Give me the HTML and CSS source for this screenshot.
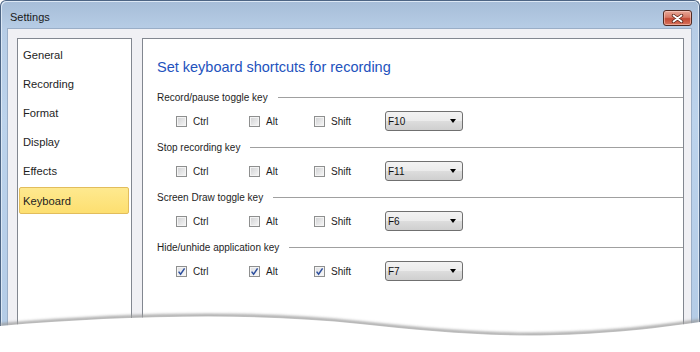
FILE: index.html
```html
<!DOCTYPE html>
<html lang="en">
<head>
    <meta charset="UTF-8">
    <title>Settings</title>
    <link rel="stylesheet" href="styles.css">
</head>
<body>
    <div class="window">
        <div class="titlebar">
            <span class="title">Settings</span>
            <button class="close-btn" type="button" aria-label="Close">
                <svg width="13" height="9" viewBox="0 0 13 9">
                    <path d="M2.5 1.5 L10.5 7.5 M10.5 1.5 L2.5 7.5" stroke="#5a2418" stroke-width="3.4" stroke-linecap="round"/>
                    <path d="M2.5 1.5 L10.5 7.5 M10.5 1.5 L2.5 7.5" stroke="#ffffff" stroke-width="1.8" stroke-linecap="round"/>
                </svg>
            </button>
        </div>

        <div class="client">
            <ul class="nav">
                <li class="nav-item">General</li>
                <li class="nav-item">Recording</li>
                <li class="nav-item">Format</li>
                <li class="nav-item">Display</li>
                <li class="nav-item">Effects</li>
                <li class="nav-item selected">Keyboard</li>
            </ul>

            <div class="content">
                <h1>Set keyboard shortcuts for recording</h1>

                <div class="group">
                    <div class="group-head"><span>Record/pause toggle key</span></div>
                    <div class="key-row">
                        <label class="check"><span class="box"></span>Ctrl</label>
                        <label class="check"><span class="box"></span>Alt</label>
                        <label class="check"><span class="box"></span>Shift</label>
                        <div class="combo"><span>F10</span><span class="arrow"></span></div>
                    </div>
                </div>

                <div class="group">
                    <div class="group-head"><span>Stop recording key</span></div>
                    <div class="key-row">
                        <label class="check"><span class="box"></span>Ctrl</label>
                        <label class="check"><span class="box"></span>Alt</label>
                        <label class="check"><span class="box"></span>Shift</label>
                        <div class="combo"><span>F11</span><span class="arrow"></span></div>
                    </div>
                </div>

                <div class="group">
                    <div class="group-head"><span>Screen Draw toggle key</span></div>
                    <div class="key-row">
                        <label class="check"><span class="box"></span>Ctrl</label>
                        <label class="check"><span class="box"></span>Alt</label>
                        <label class="check"><span class="box"></span>Shift</label>
                        <div class="combo"><span>F6</span><span class="arrow"></span></div>
                    </div>
                </div>

                <div class="group">
                    <div class="group-head"><span>Hide/unhide application key</span></div>
                    <div class="key-row">
                        <label class="check"><span class="box checked"><svg width="9" height="9" viewBox="0 0 9 9"><path d="M1.6 4.6 L3.6 7.2 L7.6 1.4" fill="none" stroke="#2d4f9e" stroke-width="1.5"/></svg></span>Ctrl</label>
                        <label class="check"><span class="box checked"><svg width="9" height="9" viewBox="0 0 9 9"><path d="M1.6 4.6 L3.6 7.2 L7.6 1.4" fill="none" stroke="#2d4f9e" stroke-width="1.5"/></svg></span>Alt</label>
                        <label class="check"><span class="box checked"><svg width="9" height="9" viewBox="0 0 9 9"><path d="M1.6 4.6 L3.6 7.2 L7.6 1.4" fill="none" stroke="#2d4f9e" stroke-width="1.5"/></svg></span>Shift</label>
                        <div class="combo"><span>F7</span><span class="arrow"></span></div>
                    </div>
                </div>
            </div>
        </div>

        <svg class="torn-edge" width="700" height="50" viewBox="0 0 700 50">
            <defs>
                <filter id="soft" x="-5%" y="-50%" width="110%" height="200%">
                    <feGaussianBlur stdDeviation="1.6"/>
                </filter>
            </defs>
            <path d="M0,23 C120,13 250,9 360,21 S560,40 700,19" fill="none" stroke="#9a9a9a" stroke-width="3" filter="url(#soft)"/>
            <path d="M0,24 C120,14 250,10 360,22 S560,41 700,20 L700,50 L0,50 Z" fill="#ffffff"/>
        </svg>
    </div>
</body>
</html>
```

FILE: styles.css
```css
body {
    margin: 0;
    background: #ffffff;
    font-family: "Liberation Sans", Arial, sans-serif;
    overflow: hidden;
}
.window {
    position: relative;
    box-sizing: border-box;
    width: 700px;
    height: 352px;
    display: flex;
    flex-direction: column;
    padding: 0 7px 0 6px;
    border: 1px solid #4d6584;
    border-bottom: none;
    border-radius: 6px 6px 0 0;
    background: linear-gradient(to bottom, #a6bdd8 0px, #b7cde6 28px, #bcd3ec 120px, #b3cbe6 352px);
    box-shadow: inset 1px 1px 0 #dce8f5, inset -1px 0 0 #dce8f5;
}
.titlebar {
    height: 27px;
    display: flex;
    align-items: flex-start;
    justify-content: space-between;
}
.title {
    padding: 10px 0 0 3px;
    font-size: 11px;
    color: #1a1a1a;
}
.close-btn {
    margin-top: 9px;
    width: 29px;
    height: 16px;
    padding: 0;
    display: flex;
    align-items: center;
    justify-content: center;
    border: 1px solid #4f2a22;
    border-radius: 3px;
    background: linear-gradient(to bottom, #e8a898 0%, #d77a66 45%, #c24a34 55%, #d8735c 100%);
    box-shadow: inset 0 0 0 1px rgba(255, 220, 210, 0.5);
}
.client {
    flex: 1;
    display: flex;
    gap: 10px;
    padding: 9px 7px 0 9px;
    border: 1px solid #9aaec7;
    border-bottom: none;
    background: #f0f0f4;
}
.nav {
    box-sizing: border-box;
    width: 115px;
    margin: 0;
    padding: 1px 0 0 0;
    list-style: none;
    background: #ffffff;
    border: 1px solid #828790;
}
.nav-item {
    height: 29px;
    box-sizing: border-box;
    margin: 0 2px 0 1px;
    padding-left: 3px;
    display: flex;
    align-items: center;
    font-size: 11.2px;
    color: #1e1e1e;
    border: 1px solid transparent;
}
.nav-item.selected {
    margin-top: 2px;
    height: 27px;
    border-color: #e2bd5c;
    border-radius: 2px;
    background: linear-gradient(to bottom, #fee98f, #fddf70);
}
.content {
    flex: 1;
    background: #ffffff;
    border: 1px solid #828790;
    padding: 18px 0 0 14px;
}
.content h1 {
    margin: 0 0 13px 0;
    font-size: 14.5px;
    line-height: 20px;
    font-weight: normal;
    color: #2352bd;
}
.group {
    margin-bottom: 9px;
}
.group-head {
    height: 14px;
    display: flex;
    align-items: center;
    font-size: 10px;
    color: #1e1e1e;
}
.group-head::after {
    content: "";
    flex: 1;
    margin-left: 10px;
    border-top: 1px solid #a0a0a0;
}
.key-row {
    margin-top: 7px;
    padding-left: 19px;
    height: 20px;
    display: grid;
    grid-template-columns: 73px 65px 71px 78px;
    align-items: center;
}
.check {
    display: flex;
    align-items: center;
    gap: 6px;
    font-size: 10px;
    color: #1e1e1e;
}
.box {
    box-sizing: border-box;
    width: 11px;
    height: 11px;
    display: flex;
    align-items: center;
    justify-content: center;
    border: 1px solid #8e8f8f;
    background: linear-gradient(135deg, #cfd0d2, #f7f7f7);
    box-shadow: inset 0 0 0 1px #f4f4f4;
}
.box.checked {
    background: linear-gradient(135deg, #dcdde0, #fafafa);
}
.combo {
    box-sizing: border-box;
    width: 78px;
    height: 20px;
    display: flex;
    align-items: center;
    justify-content: space-between;
    padding: 0 6px 0 2px;
    border: 1px solid #707070;
    border-radius: 3px;
    background: linear-gradient(to bottom, #f3f3f3 0%, #ebebeb 50%, #dddddd 51%, #cfcfcf 100%);
    font-size: 10px;
    color: #111111;
}
.arrow {
    width: 0;
    height: 0;
    border-left: 3.5px solid transparent;
    border-right: 3.5px solid transparent;
    border-top: 4px solid #000000;
}
.torn-edge {
    position: absolute;
    left: -1px;
    bottom: 0;
}
```
